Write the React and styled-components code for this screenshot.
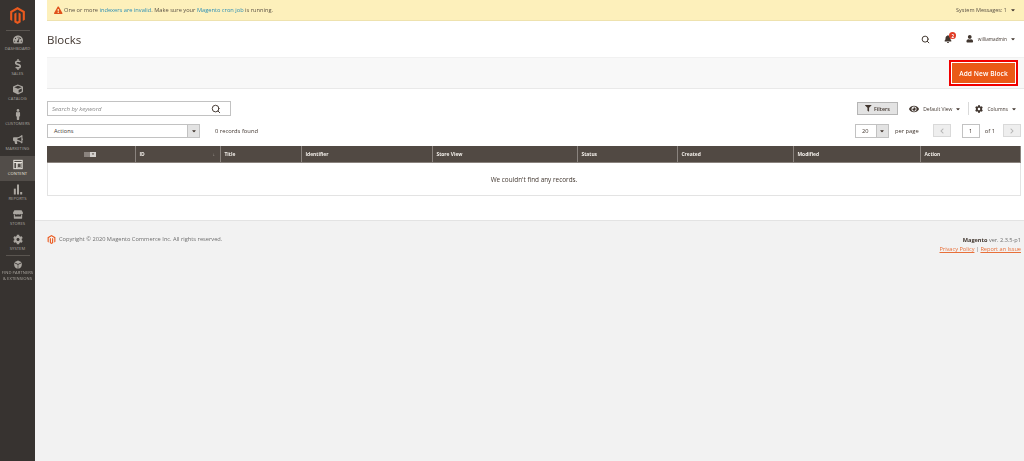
import React from 'react';
import styled, { createGlobalStyle } from 'styled-components';
import { SiMagento } from 'react-icons/si';
import { FaTachometerAlt, FaDollarSign, FaCube, FaMale, FaBullhorn, FaStore, FaCog, FaBell, FaUser, FaExclamationTriangle, FaFilter, FaEye, FaCaretDown, FaChevronLeft, FaChevronRight } from 'react-icons/fa';
import { Search } from 'lucide-react';

const Global = createGlobalStyle`
  html, body { margin: 0; height: 100%; background: #f2f2f2; }
  body { font-family: "Open Sans", "Noto Sans", sans-serif; color: #41362f; }
  #root { height: 100%; }
  * { box-sizing: border-box; }
`;
const Shell = styled.div`display: flex; min-height: 461px; height: 100%; overflow: hidden; filter: blur(0.4px);`;
const Side = styled.nav`width: 35px; flex: none; background: #373330; display: flex; flex-direction: column; align-items: center;`;
const Logo = styled.div`height: 30px; width: 100%; display: flex; justify-content: center; padding-top: 7px; color: #eb5a1e; font-size: 17px;`;
const Rule = styled.div`width: 24px; height: 1px; background: #5a5550; flex: none; margin: ${p => p.$m || '0'};`;
const Item = styled.div`
  width: 100%; height: 25px; flex: none; display: flex; flex-direction: column; align-items: center; justify-content: flex-start;
  padding-top: ${p => p.$pt || 3}px; color: #aaa6a0; background: ${p => p.$active ? '#524d49' : 'transparent'};
  ${p => p.$active && 'color: #e8e4dd;'}
  svg { font-size: 10px; height: 11px; display: block; }
`;
const ItemLabel = styled.span`font-size: 4.1px; line-height: 5.5px; margin-top: 1px; text-transform: uppercase; text-align: center; white-space: nowrap; letter-spacing: .02em;`;
const Main = styled.div`flex: 1; min-width: 0; display: flex; flex-direction: column;`;
const Content = styled.div`background: #fff; padding-left: 12px; height: 221px; flex: none; border-bottom: 1px solid #e3e3e3;`;
const Notice = styled.div`height: 21px; background: #fdf0bb; border-bottom: 1px solid #eee2ae; display: flex; align-items: center; padding: 0 8px 0 7px; font-size: 5.7px; color: #5c5346;`;
const WarnIcon = styled(FaExclamationTriangle)`font-size: 8.5px; margin-right: 1.5px; color: #e0521c;`;
const NoticeText = styled.span`flex: 1;`;
const NoticeLink = styled.span`color: #2d8fb5;`;
const MessagesLabel = styled.span`font-size: 5.5px;`;
const Caret = styled(FaCaretDown)`font-size: ${p => p.$s || 6}px; margin-left: ${p => p.$ml ?? 3}px; color: #41362f; flex: none;`;
const Header = styled.header`height: 36px; display: flex; align-items: center; padding-right: 8px;`;
const Title = styled.h1`flex: 1; margin: 0; font-size: 11.5px; font-weight: 400; color: #41362f;`;
const SearchBtn = styled(Search)`width: 9px; height: 9px; color: #41362f; margin-right: 14px; stroke-width: 2.6;`;
const BellWrap = styled.div`position: relative; width: 12px; height: 10px; margin-right: 10px; color: #41362f; font-size: 8px;`;
const Badge = styled.span`position: absolute; top: -2px; left: 5px; width: 7px; height: 7px; border-radius: 50%; background: #e03c26; color: #fff; font-size: 4.4px; font-weight: 700; display: flex; align-items: center; justify-content: center;`;
const UserName = styled.span`font-size: 4.7px; color: #41362f; margin-left: 4px;`;
const UserIcon = styled(FaUser)`font-size: 7.5px; color: #41362f;`;
const ActionsBar = styled.div`height: 32px; background: #f8f8f8; border-top: 1px solid #f1f1f1; border-bottom: 1px solid #e9e9e9; display: flex; align-items: center; justify-content: flex-end; padding-right: 6px;`;
const Highlight = styled.div`border: 2px solid #f10000; padding: 1px; background: #fff; height: 26px; display: flex;`;
const Primary = styled.button`width: 63px; border: 1px solid #ea5a17; background: #ea5a17; color: #fff; font: 600 6.6px "Open Sans", sans-serif; padding: 0; white-space: nowrap; letter-spacing: .01em;`;
const Toolbar = styled.div`display: flex; align-items: center; height: 15px; margin-right: 3px; margin-top: ${p => p.$mt}px;`;
const SearchBox = styled.div`width: 184px; height: 15px; border: 1px solid #c2c2c2; display: flex; align-items: center; justify-content: space-between; padding: 0 4px; font-size: 6px; font-style: italic; color: #8a8a8a;`;
const SearchIcon = styled(Search)`width: 10px; height: 10px; color: #41362f; margin-right: 5px; stroke-width: 2.3;`;
const Spacer = styled.div`flex: 1;`;
const FilterBtn = styled.div`width: 41px; height: 13px; background: #e3e3e3; border: 1px solid #b5b5b5; display: flex; align-items: center; justify-content: center; font-size: 5.4px; font-weight: 600; color: #41362f; svg { font-size: 6.5px; margin-right: 2px; }`;
const ViewBtn = styled.div`display: flex; align-items: center; font-size: 5px; color: #41362f; margin-left: ${p => p.$ml}px; margin-right: ${p => p.$mr || 0}px; svg:first-child { font-size: ${p => p.$icon}px; margin-right: 4px; }`;
const VRule = styled.div`width: 1px; height: 13px; background: #d9d9d9; margin-left: 7px;`;
const Select = styled.div`width: ${p => p.$w}px; height: 14px; border: 1px solid #c2c2c2; background: #fff; display: flex; align-items: stretch; font-size: 5.7px; color: #41362f;`;
const SelectText = styled.span`flex: 1; display: flex; align-items: center; padding-left: 6px;`;
const SelectArrow = styled.span`width: 12px; background: #e3e3e3; border-left: 1px solid #c2c2c2; display: flex; align-items: center; justify-content: center;`;
const Muted = styled.span`font-size: 5.8px; color: #41362f; margin-left: ${p => p.$ml || 0}px;`;
const PageBtn = styled.div`width: 18px; height: 13px; background: #eeeeee; border: 1px solid #d9d9d9; display: flex; align-items: center; justify-content: center; color: #b4b4b4; font-size: 6px; margin-left: ${p => p.$ml}px;`;
const PageInput = styled.div`width: 18px; height: 14px; border: 1px solid #c2c2c2; background: #fff; display: flex; align-items: center; justify-content: center; font-size: 5.7px; margin-left: ${p => p.$ml}px;`;
const Table = styled.div`width: 974px; margin-top: 8px;`;
const HeadRow = styled.div`display: grid; grid-template-columns: 88px 85px 81px 131px 145px 100px 116px 127px 101px; height: 17px; background: #514943; border-bottom: 1px solid #8a837e;`;
const HeadCell = styled.div`border-left: 1px solid #8a837e; display: flex; align-items: center; justify-content: ${p => p.$center ? 'center' : 'space-between'}; padding: 0 5px 0 3.5px; font-size: 4.9px; font-weight: 700; color: #f3efea; &:first-child { border-left: none; } &:last-child { border-right: 1px solid #8a837e; }`;
const Check = styled.div`display: flex; height: 5px;`;
const CheckL = styled.span`width: 6px; background: #8a837e;`;
const CheckR = styled.span`width: 6px; background: #d4d1ce; display: flex; align-items: center; justify-content: center;`;
const Sort = styled.span`font-size: 4.5px; color: #b5b0ab;`;
const Empty = styled.div`height: 33px; border: 1px solid #e3e3e3; border-top: none; display: flex; align-items: center; justify-content: center; font-size: 6.4px; color: #41362f;`;
const Footer = styled.footer`flex: 1; background: #f2f2f2; padding: 14px 3px 0 12px; display: flex; justify-content: space-between; font-size: 5.7px; color: #6e6e6e;`;
const Copy = styled.div`display: flex; align-items: flex-start; line-height: 9px; svg { color: #eb5a1e; font-size: 9px; margin-right: 3px; }`;
const Version = styled.div`text-align: right; line-height: 9px; padding-top: 1px; font-size: 5.6px;`;
const Strong = styled.strong`color: #41362f;`;
const FootLink = styled.span`color: #e8703a; text-decoration: underline;`;

const ContentIcon = () => (
  <svg viewBox="0 0 12 12" width="10" height="11" fill="none" stroke="currentColor" strokeWidth="1.2">
    <rect x="1" y="1" width="10" height="10" /><path d="M1 3.6h10M4.4 3.6V11" /><rect x="5.6" y="5" width="4" height="4.5" strokeWidth=".7" />
  </svg>
);
const BarsIcon = () => (
  <svg viewBox="0 0 12 12" width="10" height="11" fill="currentColor">
    <rect x="1" y="5" width="2.4" height="7" /><rect x="4.8" y="0" width="2.4" height="12" /><rect x="8.6" y="9" width="2.4" height="3" />
  </svg>
);
const PartnerIcon = () => (
  <svg viewBox="0 0 12 12" width="10" height="11" fill="currentColor">
    <path d="M6 .5 11 3 6 5.4 1 3z" /><path d="M.8 3.9 5.6 6.2V11.6C2.8 11.2.6 9 .8 3.9zM11.2 3.9 6.4 6.2V11.6c2.8-.4 5-2.6 4.8-7.7z" />
  </svg>
);
const nav = [
  ['Dashboard', <FaTachometerAlt />], ['Sales', <FaDollarSign />], ['Catalog', <FaCube />], ['Customers', <FaMale />],
  ['Marketing', <FaBullhorn />], ['Content', <ContentIcon />, true], ['Reports', <BarsIcon />], ['Stores', <FaStore />], ['System', <FaCog />],
];
const cols = ['ID', 'Title', 'Identifier', 'Store View', 'Status', 'Created', 'Modified', 'Action'];

export default function App() {
  return (
    <Shell>
      <Global />
      <Side>
        <Logo><SiMagento /></Logo>
        <Rule />
        {nav.map(([label, icon, active]) => (
          <Item key={label} $active={active}>{icon}<ItemLabel>{label}</ItemLabel></Item>
        ))}
        <Rule $m="-1px 0 0" />
        <Item $pt={4}><PartnerIcon /><ItemLabel>Find Partners<br />&amp; Extensions</ItemLabel></Item>
      </Side>
      <Main>
        <Content>
          <Notice>
            <WarnIcon />
            <NoticeText>One or more <NoticeLink>indexers are invalid</NoticeLink>. Make sure your <NoticeLink>Magento cron job</NoticeLink> is running.</NoticeText>
            <MessagesLabel>System Messages: 1</MessagesLabel><Caret />
          </Notice>
          <Header>
            <Title>Blocks</Title>
            <SearchBtn />
            <BellWrap><FaBell /><Badge>2</Badge></BellWrap>
            <UserIcon /><UserName>williamadmin</UserName><Caret />
          </Header>
          <ActionsBar>
            <Highlight><Primary>Add New Block</Primary></Highlight>
          </ActionsBar>
          <Toolbar $mt={12}>
            <SearchBox>Search by keyword<SearchIcon /></SearchBox>
            <Spacer />
            <FilterBtn><FaFilter />Filters</FilterBtn>
            <ViewBtn $ml={11} $icon={10}><FaEye />Default View<Caret /></ViewBtn>
            <VRule />
            <ViewBtn $ml={6} $icon={8} $mr={4}><FaCog />Columns<Caret /></ViewBtn>
          </Toolbar>
          <Toolbar $mt={7}>
            <Select $w={153}><SelectText>Actions</SelectText><SelectArrow><Caret $ml={0} /></SelectArrow></Select>
            <Muted $ml={15}>0 records found</Muted>
            <Spacer />
            <Select $w={34}><SelectText>20</SelectText><SelectArrow><Caret $ml={0} /></SelectArrow></Select>
            <Muted $ml={6}>per page</Muted>
            <PageBtn $ml={14}><FaChevronLeft /></PageBtn>
            <PageInput $ml={11}>1</PageInput>
            <Muted $ml={5}>of 1</Muted>
            <PageBtn $ml={8}><FaChevronRight /></PageBtn>
          </Toolbar>
          <Table>
            <HeadRow>
              <HeadCell $center><Check><CheckL /><CheckR><Caret $s={4} $ml={0} /></CheckR></Check></HeadCell>
              {cols.map(c => <HeadCell key={c}>{c}{c === 'ID' && <Sort>↓</Sort>}</HeadCell>)}
            </HeadRow>
            <Empty>We couldn't find any records.</Empty>
          </Table>
        </Content>
        <Footer>
          <Copy><SiMagento />Copyright © 2020 Magento Commerce Inc. All rights reserved.</Copy>
          <Version><div><Strong>Magento</Strong> ver. 2.3.5-p1</div><div><FootLink>Privacy Policy</FootLink> | <FootLink>Report an Issue</FootLink></div></Version>
        </Footer>
      </Main>
    </Shell>
  );
}
